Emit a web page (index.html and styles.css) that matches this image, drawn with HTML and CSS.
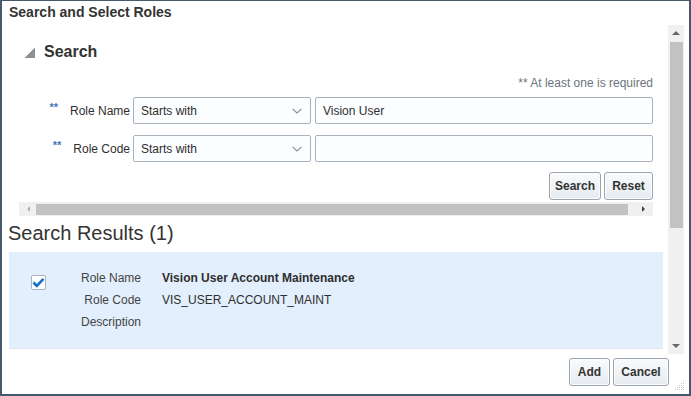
FILE: index.html
```html
<!DOCTYPE html>
<html>
<head>
<meta charset="utf-8">
<link rel="stylesheet" href="styles.css">
</head>
<body>
<div class="dialog">
  <div class="title">Search and Select Roles</div>
  <div class="main">
    <div class="content">
      <div class="sec-head"><span class="disc"></span><span class="sec-title">Search</span></div>
      <div class="req">** At least one is required</div>
      <div class="form">
        <div class="lbl"><span class="star">**</span>Role Name</div>
        <div class="select"><span>Starts with</span><svg class="chev" width="10" height="6" viewBox="0 0 10 6"><path d="M0.5 0.8 L5 5 L9.5 0.8" fill="none" stroke="#8a8f95" stroke-width="1.1"/></svg></div>
        <div class="input">Vision User</div>
        <div class="lbl"><span class="star">**</span>Role Code</div>
        <div class="select"><span>Starts with</span><svg class="chev" width="10" height="6" viewBox="0 0 10 6"><path d="M0.5 0.8 L5 5 L9.5 0.8" fill="none" stroke="#8a8f95" stroke-width="1.1"/></svg></div>
        <div class="input"></div>
      </div>
      <div class="actions"><button class="btn btn-search">Search</button><button class="btn btn-reset">Reset</button></div>
      <div class="hscroll">
        <span class="arr-left"></span>
        <span class="hthumb"></span>
        <span class="arr-right"></span>
      </div>
      <div class="results-title">Search Results (1)</div>
      <div class="panel">
        <div class="chk"><svg width="13" height="11" viewBox="0 0 13 11"><path d="M1.5 5.5 L4.8 8.8 L11.5 1.8" fill="none" stroke="#1570c8" stroke-width="2.6"/></svg></div>
        <div class="details">
          <div class="dl">Role Name</div><div class="dv strong">Vision User Account Maintenance</div>
          <div class="dl">Role Code</div><div class="dv">VIS_USER_ACCOUNT_MAINT</div>
          <div class="dl">Description</div><div class="dv"></div>
        </div>
      </div>
    </div>
    <div class="vscroll">
      <span class="arr-up"></span>
      <span class="vthumb"></span>
      <span class="vfill"></span>
      <span class="arr-down"></span>
    </div>
  </div>
  <div class="footer">
    <button class="btn btn-add">Add</button>
    <button class="btn btn-cancel">Cancel</button>
    <svg class="grip" width="10" height="10" viewBox="0 0 10 10">
      <g fill="#c4c8cc">
        <rect x="8" y="0" width="1" height="1"/>
        <rect x="6" y="2" width="1" height="1"/><rect x="8" y="2" width="1" height="1"/>
        <rect x="4" y="4" width="1" height="1"/><rect x="6" y="4" width="1" height="1"/><rect x="8" y="4" width="1" height="1"/>
        <rect x="2" y="6" width="1" height="1"/><rect x="4" y="6" width="1" height="1"/><rect x="6" y="6" width="1" height="1"/><rect x="8" y="6" width="1" height="1"/>
        <rect x="0" y="8" width="1" height="1"/><rect x="2" y="8" width="1" height="1"/><rect x="4" y="8" width="1" height="1"/><rect x="6" y="8" width="1" height="1"/><rect x="8" y="8" width="1" height="1"/>
      </g>
    </svg>
  </div>
</div>
</body>
</html>
```

FILE: styles.css
```css
* { box-sizing: border-box; }
html, body { margin: 0; padding: 0; background: #fff; }
body { font-family: "Liberation Sans", Arial, sans-serif; color: #333; }

.dialog {
  width: 691px;
  height: 396px;
  border: 2px solid #45586e;
  border-top-width: 1px;
  display: flex;
  flex-direction: column;
  background: #fff;
}

.title {
  height: 24px;
  line-height: 23px;
  padding-left: 7px;
  font-size: 14px;
  font-weight: bold;
  color: #333;
}

.main {
  display: flex;
  height: 329px;
  padding-right: 5px;
}

.content {
  width: 666px;
  overflow: hidden;
}

.sec-head {
  display: flex;
  align-items: center;
  margin-top: 17px;
  height: 20px;
  padding-left: 23px;
}
.disc {
  width: 10px;
  height: 10px;
  background: linear-gradient(135deg, transparent 50%, #8e9296 50%);
  margin-right: 9px;
  margin-top: 1px;
}
.sec-title {
  font-size: 16px;
  font-weight: bold;
  color: #333;
}

.req {
  margin-top: 14px;
  height: 14px;
  line-height: 14px;
  font-size: 12px;
  color: #6b747e;
  text-align: right;
  padding-right: 15px;
}

.form {
  margin-top: 7px;
  display: grid;
  grid-template-columns: 127px 178px 338px;
  grid-auto-rows: 27px;
  column-gap: 4px;
  row-gap: 11px;
}
.lbl {
  font-size: 12px;
  color: #2e2e2e;
  display: flex;
  align-items: center;
  justify-content: flex-end;
  margin-right: -1px;
}
.star {
  color: #3f79b9;
  font-size: 11px;
  font-weight: bold;
  align-self: flex-start;
  margin-top: 4px;
  margin-right: 12px;
}
.select, .input {
  border: 1px solid #a8b3be;
  border-radius: 2px;
  background: #fcfdfe;
  font-size: 12px;
  color: #2e2e2e;
  display: flex;
  align-items: center;
  padding-left: 7px;
}
.select { justify-content: space-between; padding-right: 8px; }
.chev { margin-top: 1px; }

.actions {
  margin-top: 10px;
  display: flex;
  justify-content: flex-end;
  gap: 3px;
  padding-right: 15px;
}
.btn {
  font-family: "Liberation Sans", Arial, sans-serif;
  font-size: 12px;
  font-weight: bold;
  color: #333;
  height: 28px;
  border: 1px solid #9aa5b0;
  border-radius: 3px;
  background: linear-gradient(#f9fbfc, #e6ebf0);
  box-shadow: inset 0 0 0 1px #fbfcfd;
  padding: 0;
}
.btn-search { width: 52px; }
.btn-reset { width: 49px; }
.btn-add { width: 41px; }
.btn-cancel { width: 56px; }

.hscroll {
  margin-top: 2px;
  margin-left: 17px;
  width: 634px;
  height: 14px;
  background: #f0f0f0;
  display: flex;
  align-items: center;
}
.arr-left {
  width: 0; height: 0;
  border-top: 3px solid transparent;
  border-bottom: 3px solid transparent;
  border-right: 3px solid #b0b0b0;
  margin-left: 8px;
}
.hthumb {
  margin-left: 6px;
  width: 592px;
  height: 11px;
  background: #c2c2c2;
}
.arr-right {
  width: 0; height: 0;
  border-top: 3px solid transparent;
  border-bottom: 3px solid transparent;
  border-left: 3px solid #444;
  margin-left: 14px;
}

.results-title {
  margin-top: 5px;
  height: 24px;
  line-height: 24px;
  padding-left: 6px;
  font-size: 20px;
  color: #333;
}

.panel {
  margin: 7px 5px 0 7px;
  height: 97px;
  background: #e3effc;
  border-bottom: 1px solid #dde6f2;
  display: flex;
  align-items: flex-start;
  padding-left: 22px;
}
.chk {
  margin-top: 23px;
  width: 15px;
  height: 15px;
  border: 1px solid #aab4be;
  border-radius: 2px;
  background: #fff;
  display: flex;
  align-items: center;
  justify-content: center;
}
.details {
  margin-top: 15px;
  margin-left: 15px;
  display: grid;
  grid-template-columns: 80px auto;
  column-gap: 21px;
  grid-auto-rows: 22px;
  font-size: 12px;
}
.dl { text-align: right; color: #444; line-height: 22px; }
.dv { color: #2e2e2e; line-height: 22px; }
.dv.strong { font-weight: bold; }

.vscroll {
  width: 16px;
  height: 329px;
  background: #f0f0f0;
  display: flex;
  flex-direction: column;
  align-items: center;
}
.arr-up {
  margin-top: 6px;
  width: 0; height: 0;
  border-left: 4px solid transparent;
  border-right: 4px solid transparent;
  border-bottom: 4px solid #666;
}
.vthumb {
  margin-top: 7px;
  width: 13px;
  height: 186px;
  background: #c2c2c2;
}
.vfill { flex: 1; }
.arr-down {
  margin-bottom: 6px;
  width: 0; height: 0;
  border-left: 4px solid transparent;
  border-right: 4px solid transparent;
  border-top: 4px solid #666;
}

.footer {
  flex: 1;
  display: flex;
  align-items: flex-start;
  justify-content: flex-end;
  gap: 3px;
  padding-top: 4px;
  padding-right: 4px;
}
.grip {
  align-self: flex-end;
  margin-bottom: 3px;
  margin-left: 3px;
}
```
